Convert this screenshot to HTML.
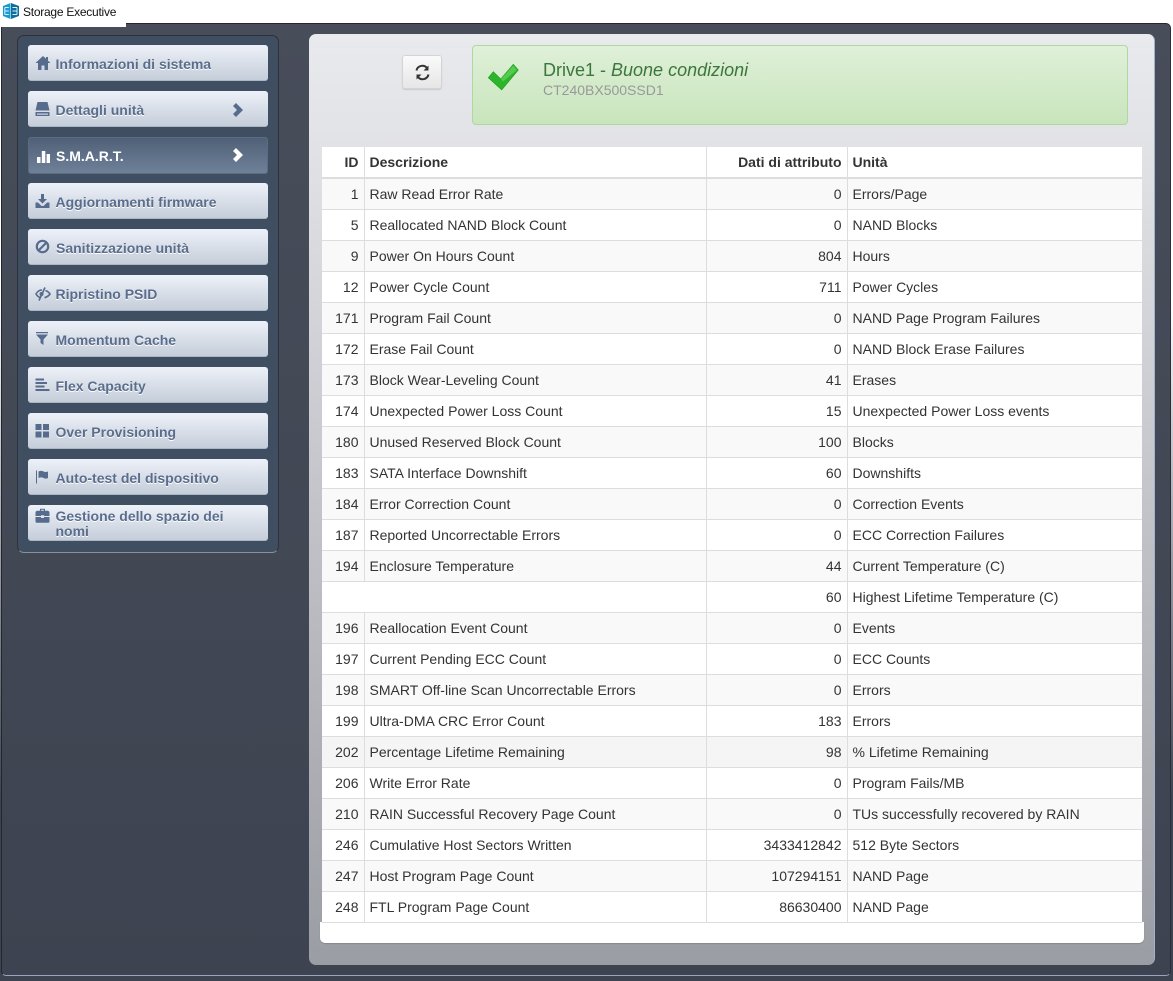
<!DOCTYPE html>
<html lang="it"><head><meta charset="utf-8"><title>Storage Executive</title>
<style>
html,body{margin:0;padding:0;width:1173px;height:981px;overflow:hidden;background:#fff;font-family:"Liberation Sans",sans-serif}
*{box-sizing:border-box}
#bg{position:absolute;left:0;top:0;width:1173px;height:981px;background:linear-gradient(#fff,#fff 300px,#3d4350 800px)}
#bot{position:absolute;left:0;top:976px;width:1173px;height:5px;background:#3d4350}
#top{position:absolute;left:0;top:0;width:1173px;height:23px;background:#fff}
#tab{position:absolute;left:0;top:0;width:126px;height:27px;background:#fff;z-index:5}
#tab span{position:absolute;left:23px;top:5px;font-size:12px;line-height:15px;color:#111;white-space:nowrap;letter-spacing:-.25px}
#tab svg{position:absolute;left:3px;top:3px}
#frame{position:absolute;left:1px;top:23px;width:1170px;height:953px;border:1px solid #23262e;border-right-color:#2a2e38;border-bottom:1px solid #9aa5bd;border-radius:0 5px 5px 5px;background:linear-gradient(#484d5a,#3d4350)}
#side{position:absolute;left:17px;top:35px;width:262px;height:518px;background:#3f4f61;border:1px solid #2c323d;border-bottom-color:#8a919c;border-radius:7px}
.b{position:absolute;left:28px;width:240px;height:36px;border-radius:3px;background:linear-gradient(#edf1f9,#c5ced9);border-bottom:1px solid #a9b6c6;color:#5a6d8c;font-weight:bold;font-size:14px;line-height:15px;text-shadow:0 1px 0 #fff}
.b span{position:absolute;left:27.5px;top:12px;white-space:nowrap}
.b svg{position:absolute;left:7px;top:10px;fill:#576b8c}
.b svg.ch{left:205px;top:12px}
.b.on{background:linear-gradient(#4f6077,#6f8199);border:1px solid #5b6b80;color:#fff;text-shadow:none}
.b.on svg{fill:#fff}
#main{position:absolute;left:309px;top:34px;width:846px;height:931px;border-radius:7px;border-right:1px solid #a3b2cc;background:linear-gradient(#e9eaed,#e0e1e5 130px,#9b9da4)}
#ref{position:absolute;left:402px;top:55px;width:40px;height:34px;border:1px solid #d4d4d6;border-radius:3px;background:linear-gradient(#fafafa,#e6e6e6);box-shadow:0 1px 1px rgba(0,0,0,.12)}
#ref svg{position:absolute;left:11px;top:8px}
#alert{position:absolute;left:472px;top:45px;width:656px;height:80px;border:1px solid #afd8a0;border-radius:4px;background:linear-gradient(#dff0d8,#c8e5bc)}
#alert svg{position:absolute;left:15px;top:18px}
#alert b{position:absolute;left:70px;top:14px;font-weight:normal;font-size:18px;line-height:20px;color:#3c763d;white-space:nowrap}
#alert small{position:absolute;left:70px;top:36px;font-size:14px;line-height:16px;color:#999;white-space:nowrap}
#wrap{position:absolute;left:320px;top:146px;width:824px;height:798px}
#foot{position:absolute;left:0;top:776px;width:824px;height:21px;background:#fff;border-radius:0 0 5px 5px;box-shadow:0 1px 1px rgba(0,0,0,.15)}
table{position:absolute;left:2px;top:1px;width:820px;border-collapse:collapse;table-layout:fixed;font-size:14px;color:#333;background:#fff}
td,th{height:31px;padding:0 5px;border-top:1px solid #ddd;border-left:1px solid #ddd;line-height:16px;white-space:nowrap;overflow:hidden}
th{border-top:0;height:31px;border-bottom:2px solid #ddd;text-align:left}
td:first-child,th:first-child{border-left:0}
.r{text-align:right}
tr:nth-child(even) td{background:#f9f9f9}
tr.h td{background:#f5f5f5!important}
tr:last-child td{border-bottom:1px solid #ddd}
</style></head><body>
<div id="bg"></div><div id="bot"></div>
<div id="top"></div>
<div id="tab"><svg width="16" height="16" viewBox="0 0 16 16"><path d="M0 3L7.500 0V16L0 13z" fill="#1b9ad2"/><path d="M8 0l8 3v10l-8 3z" fill="#0f6d9b"/><path d="M1.800 4.500h4M1.800 8h4M1.800 11.500h4M1.800 4.500v7M9.500 4.500h4.500M9.500 8h4.500M9.500 11.500h4.500M14 4.500v7" fill="none" stroke="#d5f0fb" stroke-width="1"/></svg><span>Storage Executive</span></div>
<div id="frame"></div>
<div id="side"></div>

<div class="b" style="top:45px"><svg width="16" height="16" viewBox="0 0 16 16"><path d="M8 1L0.500 8H3v7h3.500v-4.500h3V15H13V8h2.500L13 5.600V2h-2v1.800z"/></svg><span>Informazioni di sistema</span></div>
<div class="b" style="top:91px"><svg width="15" height="16" viewBox="0 0 15 16"><path d="M2.500 1h10l2 8.500H.5zM.5 11h14v4H.5z"/><path d="M2 12.600h11v1H2z" fill="#e6ebf3"/></svg><span>Dettagli unità</span><svg class="ch" width="11" height="14" viewBox="0 0 11 14"><path d="M0 3L3 0l7 7-7 7-3-3 4-4z"/></svg></div>
<div class="b on" style="top:137px;height:37px"><svg style="left:7px;top:11px" width="15" height="15" viewBox="0 0 15 15"><path d="M1 8h3.500v6H1zM5.800 2h3.500v12H5.800zM10.600 5H14v9h-3.400z"/></svg><span style="left:27px;top:11px">S.M.A.R.T.</span><svg class="ch" style="left:204px;top:10px" width="11" height="14" viewBox="0 0 11 14"><path d="M0 3L3 0l7 7-7 7-3-3 4-4z"/></svg></div>
<div class="b" style="top:183px"><svg width="15" height="16" viewBox="0 0 15 16"><path d="M6 1h3v5h3L7.500 10.500 3 6h3zM.5 9.500H3L6.500 13h2L12 9.500h2.500V15H.5z"/></svg><span>Aggiornamenti firmware</span></div>
<div class="b" style="top:229px"><svg width="16" height="16" viewBox="0 0 16 16"><circle cx="7.500" cy="7.500" r="5.700" fill="none" stroke="#576b8c" stroke-width="2.200"/><path d="M3.500 11.500l8-8" stroke="#576b8c" stroke-width="2.200"/></svg><span style="left:28px">Sanitizzazione unità</span></div>
<div class="b" style="top:275px"><svg style="top:11px" width="16" height="16" viewBox="0 0 16 16"><circle cx="6.500" cy="8" r="2"/><path d="M7 4C4.500 4 2.200 5.800 1 8c1 1.700 2.200 2.800 3.800 3.500M10 1.500L4 14.500M10.500 4.500C12.500 5.200 14 6.500 15 8c-1 1.500-3 3-5.500 3.700" fill="none" stroke="#576b8c" stroke-width="1.600"/></svg><span>Ripristino PSID</span></div>
<div class="b" style="top:321px"><svg width="14" height="16" viewBox="0 0 14 16"><path d="M1 1h12v1.200H1zM1 3.500h12L8.500 8.500V14l-3-2V8.500z"/></svg><span>Momentum Cache</span></div>
<div class="b" style="top:367px"><svg width="15" height="16" viewBox="0 0 15 16"><path d="M.5 1.500H9v2H.5zM.5 5H12v2H.5zM.5 8.500h9v2h-9zM.5 12h14v2H.5z"/></svg><span>Flex Capacity</span></div>
<div class="b" style="top:413px"><svg width="15" height="15" viewBox="0 0 15 15"><path d="M.5 1h6v6h-6zM8 1h6v6H8zM.5 8.500h6v6h-6zM8 8.500h6v6H8z"/></svg><span>Over Provisioning</span></div>
<div class="b" style="top:459px"><svg width="15" height="16" viewBox="0 0 15 16"><path d="M1 1.500h1v13H1zM3.500 2.500c2-1 3.500-.8 5 0s3 .6 4.500 0v6.500c-1.500.8-3 .8-4.500 0s-3-.8-5 0z"/></svg><span>Auto-test del dispositivo</span></div>
<div class="b" style="top:505px"><svg style="top:3px" width="15" height="15" viewBox="0 0 15 15"><path d="M5 .8h5v2h2.500c1 0 2 .6 2 1.700V8H9v-.8H6V8H.5V4.500c0-1.100 1-1.700 2-1.700H5zM6.200 1.800v1h2.600v-1zM.5 9H6v1h3V9h5.500v4.500c0 .7-.5 1.200-1.200 1.200H1.700C1 14.700.5 14.200.5 13.500z"/></svg><span style="top:4px;line-height:15px">Gestione dello spazio dei<br>nomi</span></div>

<div id="main"></div>
<div id="ref"><svg width="17" height="17" viewBox="0 0 17 17"><path d="M2.500 6.500A6 6 0 0 1 13 4" fill="none" stroke="#333" stroke-width="2"/><path d="M14.500 1.500v5h-5z" fill="#333"/><path d="M14.500 10.500A6 6 0 0 1 4 13" fill="none" stroke="#333" stroke-width="2"/><path d="M2.500 15.500v-5h5z" fill="#333"/></svg></div>
<div id="alert"><svg width="31" height="27" viewBox="0 0 31 27"><path d="M.3 13.700L5.300 7.700 12.700 15 25.300.3 30.300 6 13.700 26z" fill="#2ab52a" stroke="#1f9a24" stroke-width=".6"/><path d="M12.700 15L25.300 1.500 29 6 15 17.500z" fill="#7adb68" opacity=".55"/></svg><b>Drive1 - <i>Buone condizioni</i></b><small>CT240BX500SSD1</small></div>

<div id="wrap"><div id="foot"></div><table>
<colgroup><col style="width:42px"><col style="width:342px"><col style="width:141px"><col></colgroup>
<tr><th class="r">ID</th><th>Descrizione</th><th class="r">Dati di attributo</th><th>Unità</th></tr>
<tr><td class="r">1</td><td>Raw Read Error Rate</td><td class="r">0</td><td>Errors/Page</td></tr>
<tr><td class="r">5</td><td>Reallocated NAND Block Count</td><td class="r">0</td><td>NAND Blocks</td></tr>
<tr><td class="r">9</td><td>Power On Hours Count</td><td class="r">804</td><td>Hours</td></tr>
<tr><td class="r">12</td><td>Power Cycle Count</td><td class="r">711</td><td>Power Cycles</td></tr>
<tr><td class="r">171</td><td>Program Fail Count</td><td class="r">0</td><td>NAND Page Program Failures</td></tr>
<tr><td class="r">172</td><td>Erase Fail Count</td><td class="r">0</td><td>NAND Block Erase Failures</td></tr>
<tr><td class="r">173</td><td>Block Wear-Leveling Count</td><td class="r">41</td><td>Erases</td></tr>
<tr><td class="r">174</td><td>Unexpected Power Loss Count</td><td class="r">15</td><td>Unexpected Power Loss events</td></tr>
<tr><td class="r">180</td><td>Unused Reserved Block Count</td><td class="r">100</td><td>Blocks</td></tr>
<tr><td class="r">183</td><td>SATA Interface Downshift</td><td class="r">60</td><td>Downshifts</td></tr>
<tr><td class="r">184</td><td>Error Correction Count</td><td class="r">0</td><td>Correction Events</td></tr>
<tr><td class="r">187</td><td>Reported Uncorrectable Errors</td><td class="r">0</td><td>ECC Correction Failures</td></tr>
<tr><td class="r">194</td><td>Enclosure Temperature</td><td class="r">44</td><td>Current Temperature (C)</td></tr>
<tr><td colspan="2"></td><td class="r">60</td><td>Highest Lifetime Temperature (C)</td></tr>
<tr><td class="r">196</td><td>Reallocation Event Count</td><td class="r">0</td><td>Events</td></tr>
<tr><td class="r">197</td><td>Current Pending ECC Count</td><td class="r">0</td><td>ECC Counts</td></tr>
<tr><td class="r">198</td><td>SMART Off-line Scan Uncorrectable Errors</td><td class="r">0</td><td>Errors</td></tr>
<tr><td class="r">199</td><td>Ultra-DMA CRC Error Count</td><td class="r">183</td><td>Errors</td></tr>
<tr class="h"><td class="r">202</td><td>Percentage Lifetime Remaining</td><td class="r">98</td><td>% Lifetime Remaining</td></tr>
<tr><td class="r">206</td><td>Write Error Rate</td><td class="r">0</td><td>Program Fails/MB</td></tr>
<tr><td class="r">210</td><td>RAIN Successful Recovery Page Count</td><td class="r">0</td><td>TUs successfully recovered by RAIN</td></tr>
<tr><td class="r">246</td><td>Cumulative Host Sectors Written</td><td class="r">3433412842</td><td>512 Byte Sectors</td></tr>
<tr><td class="r">247</td><td>Host Program Page Count</td><td class="r">107294151</td><td>NAND Page</td></tr>
<tr><td class="r">248</td><td>FTL Program Page Count</td><td class="r">86630400</td><td>NAND Page</td></tr>
</table></div>
</body></html>
